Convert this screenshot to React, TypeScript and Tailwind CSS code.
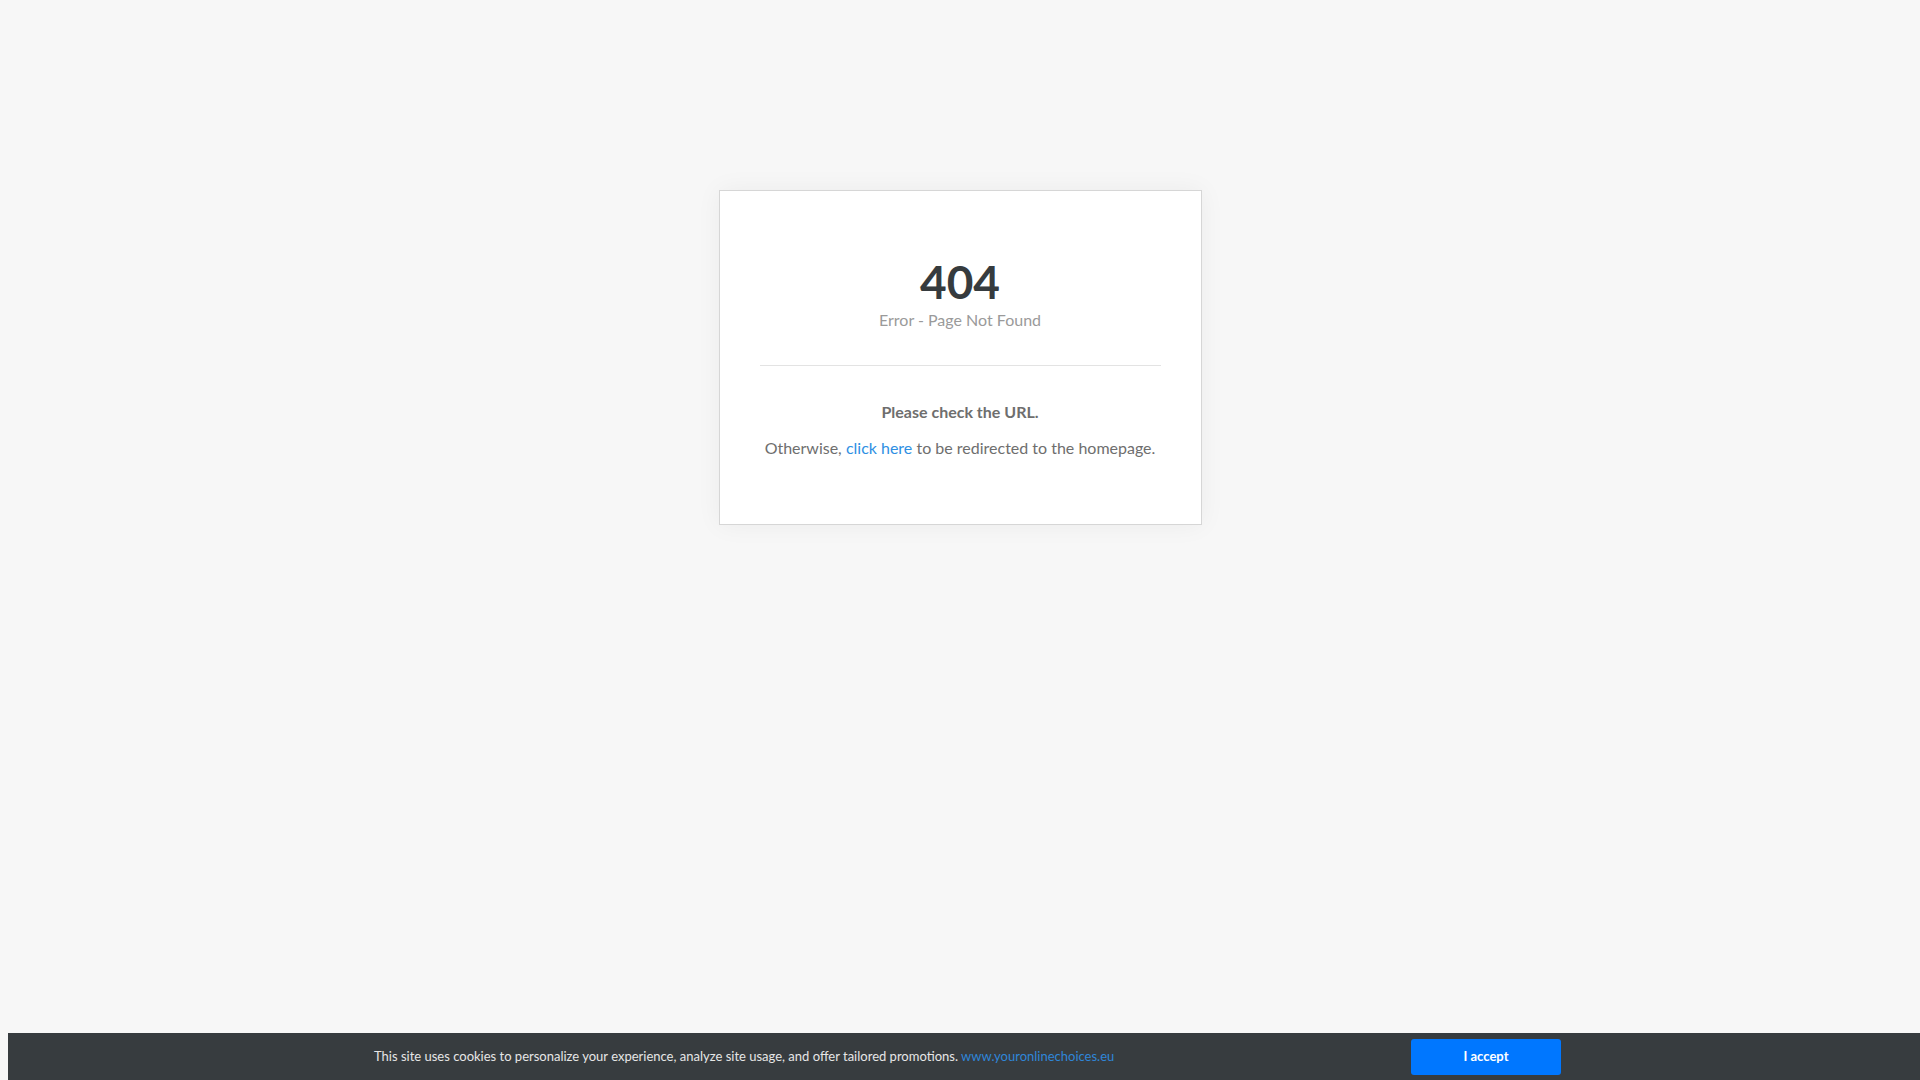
export default function App() {
  return (
    <div className="min-h-screen bg-[#f7f7f7] font-['Lato',sans-serif] text-[#6b6b6b]">
      <div className="flex justify-center pt-[190px]">
        <div className="w-[483px] h-[335px] bg-white border border-[#d6d6d6] shadow-[0_0_24px_rgba(0,0,0,0.05)] px-[40px] text-center">
          <h1 className="pt-[68px] text-[46px] leading-none font-bold text-[#363b3e]">404</h1>
          <p className="mt-[3px] text-[16px] text-[#9a9a9a]">Error - Page Not Found</p>
          <hr className="mt-[33px] border-t border-[#e3e3e3]" />
          <p className="mt-[34px] text-[16px] font-bold text-[#6e6e6e]">Please check the URL.</p>
          <p className="mt-[12px] text-[16px] text-[#6e6e6e]">
            Otherwise,{' '}
            <a href="#" className="text-[#2e8fe3]">
              click here
            </a>{' '}
            to be redirected to the homepage.
          </p>
        </div>
      </div>

      {/* cookie consent bar */}
      <div className="fixed bottom-0 left-[8px] right-0 h-[47px] bg-[#373c3f] flex items-center justify-between pl-[366px] pr-[359px]">
        <p className="text-[13px] text-[#e6e6e6]">
          This site uses cookies to personalize your experience, analyze site usage, and offer tailored promotions.{' '}
          <a href="#" className="text-[#2f86d8]">
            www.youronlinechoices.eu
          </a>
        </p>
        <button className="w-[150px] h-[36px] rounded-[3px] bg-[#0077ff] text-white text-[13px] font-bold">
          I accept
        </button>
      </div>
    </div>
  );
}
